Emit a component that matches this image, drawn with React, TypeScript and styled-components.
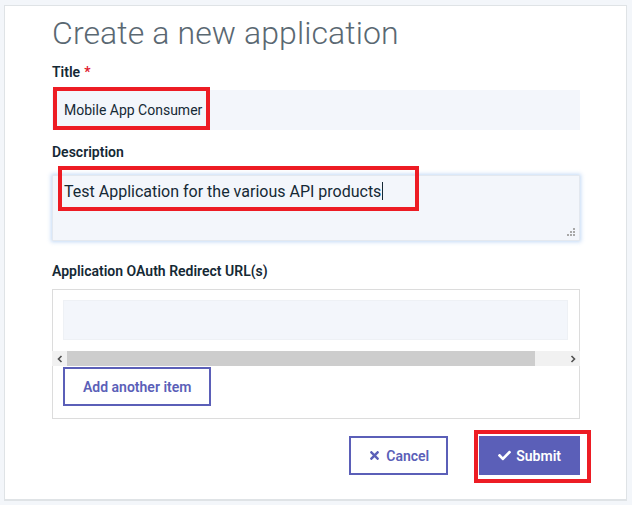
import React from "react";
import styled, { createGlobalStyle } from "styled-components";
import { FaCheck, FaTimes } from "react-icons/fa";

const GlobalStyle = createGlobalStyle`
  html, body { margin: 0; padding: 0; background: #f3f6fa; }
  body { font-family: Roboto, "Noto Sans", sans-serif; color: #152935; }
  * { box-sizing: border-box; }
`;

const Page = styled.div`
  width: 632px;
  height: 505px;
  padding: 5px 5px 0 4px;
  overflow: hidden;
`;

const Card = styled.div`
  height: 496px;
  background: #fff;
  border: 1px solid #dfe3e6;
  border-bottom-width: 2px;
  padding: 7px 46px 0 47px;
  display: flex;
  flex-direction: column;
`;

const Heading = styled.h1`
  margin: 0;
  font-size: 32px;
  font-weight: 300;
  line-height: 40px;
  letter-spacing: 0.1px;
  color: #5a6872;
`;

const Label = styled.div<{ $mt: number }>`
  margin-top: ${(p) => p.$mt}px;
  font-size: 14px;
  font-weight: 600;
  line-height: 18px;
  color: #152935;
`;

const Required = styled.span`
  color: #e0182d;
  margin-left: 4px;
`;

const Field = styled.div<{ $mt: number }>`
  position: relative;
  margin-top: ${(p) => p.$mt}px;
`;

const TextInput = styled.div`
  height: 40px;
  background: #f3f6fb;
  display: flex;
  align-items: center;
  padding: 0 12px;
  font-size: 14px;
  color: #152935;
`;

const TextArea = styled.div`
  position: relative;
  height: 66px;
  background: #f3f6fb;
  border: 1px solid #e3e8ef;
  box-shadow: 0 0 4px 1px rgba(120, 170, 235, 0.45);
  padding: 5px 11px;
  font-size: 16px;
  line-height: 22px;
  color: #152935;
`;

const Caret = styled.span`
  display: inline-block;
  width: 1px;
  height: 18px;
  background: #152935;
  vertical-align: -3px;
  margin-left: 1px;
`;

const Grip = styled.svg`
  position: absolute;
  right: 3px;
  bottom: 3px;
`;

const Annotation = styled.span<{ $t: number; $l: number; $w: number; $h: number }>`
  position: absolute;
  top: ${(p) => p.$t}px;
  left: ${(p) => p.$l}px;
  width: ${(p) => p.$w}px;
  height: ${(p) => p.$h}px;
  border: 4px solid #ed1c24;
  pointer-events: none;
`;

const ArrayBox = styled.div`
  margin-top: 9px;
  height: 130px;
  border: 1px solid #dcdcdc;
  display: flex;
  flex-direction: column;
`;

const ScrollArea = styled.div`
  padding: 10px 11px 11px 10px;
`;

const ItemInput = styled.div`
  height: 40px;
  background: #f3f6fb;
  border: 1px solid #eef1f5;
`;

const ScrollBar = styled.div`
  height: 15px;
  margin: 0 -1px;
  background: #f1f1f1;
  display: flex;
  align-items: center;
`;

const ScrollArrow = styled.div`
  width: 15px;
  height: 15px;
  display: flex;
  align-items: center;
  justify-content: center;
`;

const ScrollTrack = styled.div`
  flex: 1;
  height: 15px;
  display: flex;
`;

const ScrollThumb = styled.div`
  height: 15px;
  background: #cdcdcd;
`;

const AddRow = styled.div`
  padding: 1px 10px 0;
`;

const OutlineButton = styled.button<{ $px?: number }>`
  height: 39px;
  background: #fff;
  border: 2px solid #5b5fb8;
  color: #5b5fb8;
  font-family: inherit;
  font-size: 14px;
  font-weight: 600;
  display: inline-flex;
  align-items: center;
  justify-content: center;
  gap: 5px;
  padding: 0 ${(p) => p.$px ?? 16}px;
  cursor: pointer;
`;

const FilledButton = styled(OutlineButton)`
  background: #5b5fb8;
  color: #fff;
  border-color: #5b5fb8;
`;

const Actions = styled.div`
  margin-top: 17px;
  display: flex;
  justify-content: flex-end;
  gap: 31px;
`;

const ButtonSlot = styled.div`
  position: relative;
`;

export default function App() {
  return (
    <>
      <GlobalStyle />
      <Page>
        <Card>
          <Heading>Create a new application</Heading>
          <Label $mt={10}>
            Title<Required>*</Required>
          </Label>
          <Field $mt={9}>
            <TextInput>Mobile App Consumer</TextInput>
            <Annotation $t={-3} $l={1} $w={157} $h={43} />
          </Field>
          <Label $mt={13}>Description</Label>
          <Field $mt={14}>
            <TextArea>
              Test Application for the various API products
              <Caret />
              <Grip width="9" height="9" viewBox="0 0 9 9">
                <g fill="#a8a8a8">
                  <rect x="6" y="0" width="2" height="2" />
                  <rect x="3" y="3" width="2" height="2" />
                  <rect x="6" y="3" width="2" height="2" />
                  <rect x="0" y="6" width="2" height="2" />
                  <rect x="3" y="6" width="2" height="2" />
                  <rect x="6" y="6" width="2" height="2" />
                </g>
              </Grip>
            </TextArea>
            <Annotation $t={-9} $l={6} $w={361} $h={45} />
          </Field>
          <Label $mt={21}>Application OAuth Redirect URL(s)</Label>
          <ArrayBox>
            <ScrollArea>
              <ItemInput />
            </ScrollArea>
            <ScrollBar>
              <ScrollArrow>
                <svg width="6" height="8" viewBox="0 0 6 8">
                  <path d="M4.5 1 L1.5 4 L4.5 7" fill="none" stroke="#505050" strokeWidth="1.6" />
                </svg>
              </ScrollArrow>
              <ScrollTrack>
                <ScrollThumb style={{ width: "468px" }} />
              </ScrollTrack>
              <ScrollArrow>
                <svg width="6" height="8" viewBox="0 0 6 8">
                  <path d="M1.5 1 L4.5 4 L1.5 7" fill="none" stroke="#505050" strokeWidth="1.6" />
                </svg>
              </ScrollArrow>
            </ScrollBar>
            <AddRow>
              <OutlineButton $px={18}>Add another item</OutlineButton>
            </AddRow>
          </ArrayBox>
          <Actions>
            <OutlineButton $px={17}>
              <FaTimes size={13} />
              Cancel
            </OutlineButton>
            <ButtonSlot>
              <FilledButton $px={17}>
                <FaCheck size={13} />
                Submit
              </FilledButton>
              <Annotation $t={-6} $l={-5} $w={117} $h={53} />
            </ButtonSlot>
          </Actions>
        </Card>
      </Page>
    </>
  );
}
